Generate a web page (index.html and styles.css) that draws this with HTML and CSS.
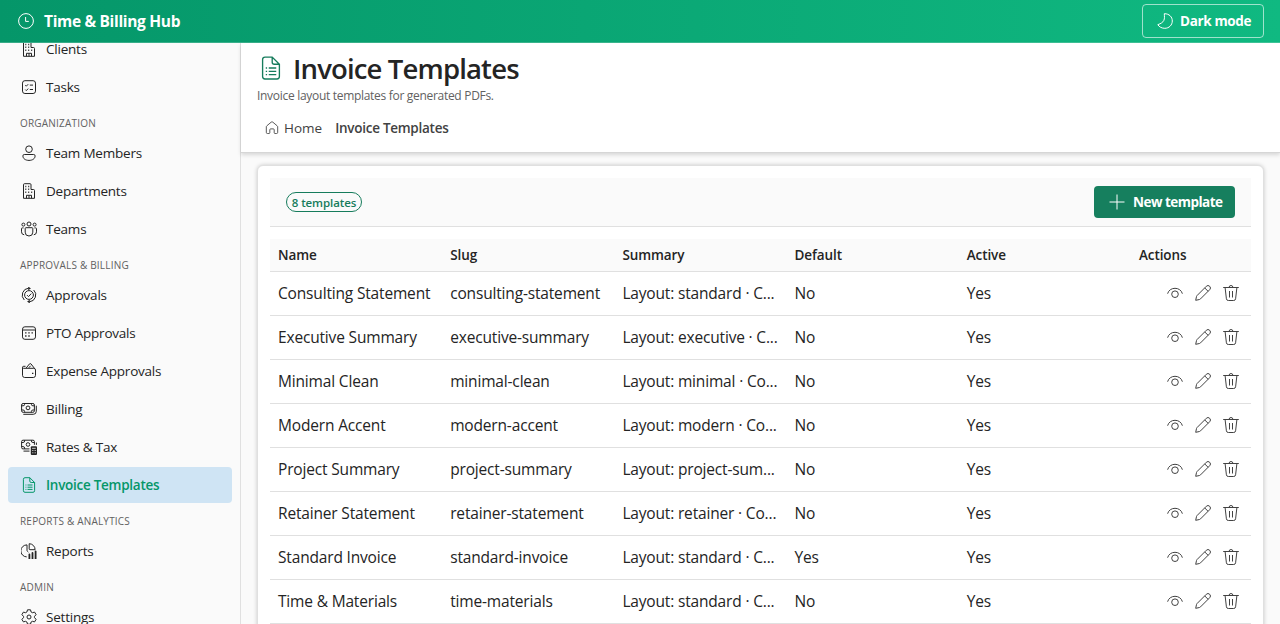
FILE: index.html
```html
<!DOCTYPE html>
<html lang="en">
<head>
    <meta charset="UTF-8">
    <meta name="viewport" content="width=device-width, initial-scale=1.0">
    <title>Invoice Templates - Time &amp; Billing Hub</title>
    <link rel="stylesheet" href="styles.css">
</head>
<body>
    <!-- icon sprite -->
    <svg class="sprite">
        <symbol id="i-clock" viewBox="0 0 16 16"><circle cx="8" cy="8" r="7.4"/><path d="M7.6 4v4.4h3.2"/></symbol>
        <symbol id="i-moon" viewBox="0 0 16 16"><path d="M7.3.7c5 0 8 3.200 8 7.300 0 4-3.200 7.300-7.500 7.300-3 0-5.500-1.300-7-3.600 3.200-1.200 5-2.300 6-4.200 1-2 .6-4.300.5-6.800z"/></symbol>
        <symbol id="i-building" viewBox="0 0 16 16"><path d="M2.500 15.300V1.700q0-1 1-1h5.500q1 0 1 1v4.800h2.500q1 0 1 1v7.800zM5.500 15.300v-3h5v3M8 12.500v2.800"/><path class="dots" d="M4.300 3.500h1M7.200 3.500h1M4.300 6.300h1M7.200 6.300h1M4.300 9.200h1M7.200 9.200h1M10.200 9.200h1"/></symbol>
        <symbol id="i-tasks" viewBox="0 0 16 16"><rect x="1.500" y="1.700" width="13" height="12.800" rx="2.400"/><path d="M4.300 6.200l1 1 1.900-2M8.800 6.100h3.200M4.300 10.600l1 1 1.900-2M8.800 10.500h3.200"/></symbol>
        <symbol id="i-person" viewBox="0 0 16 16"><circle cx="8" cy="4.200" r="3.300"/><path d="M3.300 9.500h9.400q1.400 0 1.400 1.400c0 2.800-2.600 4.500-6.100 4.500s-6.100-1.700-6.100-4.500q0-1.400 1.400-1.400z"/></symbol>
        <symbol id="i-people" viewBox="0 0 16 16"><circle cx="2.400" cy="3.600" r="1.500"/><circle cx="8" cy="3" r="2"/><circle cx="13.600" cy="3.600" r="1.500"/><path d="M5 6.700h6q.8 0 .8.800v3.700a3.800 3.800 0 0 1-7.600 0V7.500q0-.8.800-.8zM2.600 6.900H1.300q-.8 0-.8.800v3.100a3 3 0 0 0 2.700 3M13.400 6.900h1.300q.8 0 .8.800v3.100a3 3 0 0 1-2.700 3"/></symbol>
        <symbol id="i-approve" viewBox="0 0 16 16"><circle cx="8" cy="8" r="4.400"/><path d="M6 8.100l1.500 1.500 2.800-3M7.500 1.200A6.900 6.900 0 0 0 3.300 13M8.500 14.800A6.900 6.900 0 0 0 12.700 3"/><path class="solid" d="M7.200-.5l2.700 1.900-2.700 1.900zM8.800 16.500l-2.700-1.900 2.700-1.900z"/></symbol>
        <symbol id="i-calendar" viewBox="0 0 16 16"><rect x="1.500" y="1.800" width="13" height="12.500" rx="2.400"/><path d="M1.500 5h13"/><path class="dots" d="M7.300 7.900h1.400M10.500 7.900h1.400M4.100 11h1.400M7.300 11h1.400M4.100 7.900h1.400"/></symbol>
        <symbol id="i-wallet" viewBox="0 0 16 16"><path d="M1.500 4.500v7.800q0 2.200 2.200 2.200h8.600q2.200 0 2.200-2.200V7q0-1.700-1.700-1.700H2.700q-1.200 0-1.200-1t1.200-1h1.800M5.200 5l3.300-4.100q.7-.7 1.500 0l3.200 4.100M7.800 4.800l1.800-2"/><path class="dots" d="M11 10.400h1.400"/></symbol>
        <symbol id="i-money" viewBox="0 0 16 16"><rect x=".6" y="2.500" width="12.800" height="8.800" rx="1.500"/><circle cx="7" cy="6.900" r="1.900"/><path d="M3.600 2.500v.8q0 1.500-1.500 1.500H.6M10.400 2.500v.8q0 1.500 1.500 1.500h1.500M3.600 11.300v-.8Q3.600 9 2.100 9H.6M10.400 11.300v-.8q0-1.500 1.500-1.500h1.500M2.300 13.300h10q3 0 3-3V4.700"/></symbol>
        <symbol id="i-moneycalc" viewBox="0 0 16 16"><path d="M8.500 9.900H2Q.6 9.900.6 8.500V2.600q0-1.400 1.400-1.400h10q1.400 0 1.400 1.400v3.200M3.600 1.200V2q0 1.500-1.500 1.500H.6M10.400 1.200V2q0 1.500 1.500 1.500h1.500M3.600 9.900v-.8Q3.600 7.600 2.100 7.600H.6M2.500 12.100h6M15.400 3.500v2.400"/><circle cx="7" cy="5.500" r="1.800"/><rect class="solid" x="9.800" y="7.300" width="6.200" height="8.700" rx="1"/><path class="cut" d="M11.100 9.300h3.600M11.100 11.500h.8M12.600 11.500h.8M14.100 11.500h.8M11.100 13.800h.8M12.600 13.800h.8M14.100 13.800h.8"/></symbol>
        <symbol id="i-doc" viewBox="0 0 16 16"><path d="M4 .7h4.800L13.600 5.500v8.200q0 1.600-1.600 1.600H4q-1.600 0-1.600-1.600V2.300Q2.400.7 4 .7zM8.800.7v3.400q0 1.400 1.400 1.400h3.400M4.500 8h.9M6.500 8h5M4.500 10.200h.9M6.500 10.200h5M4.500 12.400h.9M6.500 12.400h5"/></symbol>
        <symbol id="i-chart" viewBox="0 0 16 16"><path d="M6 1.900a6 6 0 0 0-.3 12M6 1.900v5.300q0 .8.600 1.300l.7.700M8.200.7v5.200q0 .8.800.8h5.100A6 6 0 0 0 8.200.7z"/><path class="solid" d="M7.500 11.500q0-.9.900-.9t.9.900V16H7.500zM10.600 9.900q0-.9.900-.9t.9.900V16h-1.800zM13.700 8.300q0-.9.900-.9t.9.900V16h-1.800z"/></symbol>
        <symbol id="i-gear" viewBox="0 0 16 16"><circle cx="8" cy="8" r="2"/><path stroke-linejoin="round" d="M6.500.8h3l.6 2.200 1.300.7 2.200-.6 1.500 2.600L13.500 7.300v1.400l1.600 1.600-1.500 2.600-2.200-.6-1.300.7-.6 2.200h-3L5.900 13l-1.300-.7-2.200.6L.9 10.300l1.600-1.600V7.300L.9 5.700l1.500-2.600 2.200.6L5.900 3z"/></symbol>
        <symbol id="i-home" viewBox="0 0 16 16"><path d="M7.100 1.300q.9-.7 1.800 0l5 4.200q.6.500.6 1.300V13q0 1.300-1.300 1.300h-1.700q-1 0-1-1V10q0-1-1-1h-3q-1 0-1 1v3.300q0 1-1 1H2.800Q1.500 14.300 1.500 13V6.800q0-.8.600-1.300z"/></symbol>
        <symbol id="i-plus" viewBox="0 0 16 16"><path d="M8 .5v15M.5 8h15"/></symbol>
        <symbol id="i-eye" viewBox="0 0 16 16"><path d="M.6 8.700C1.600 5.200 4.500 3.300 8 3.300s6.400 1.900 7.400 5.400"/><circle cx="8" cy="9.200" r="3.300"/></symbol>
        <symbol id="i-pencil" viewBox="0 0 16 16"><path d="M11.300 1.300a2.300 2.300 0 0 1 3.400 3.400L5.500 13.900q-.4.400-1 .6L.7 15.300l.8-3.800q.1-.6.600-1zM9.700 2.900l3.400 3.400"/></symbol>
        <symbol id="i-trash" viewBox="0 0 16 16"><path d="M.2 2.500h15.600M6.100 2.400a1.900 1.900 0 0 1 3.800 0M2.100 2.600l1.300 11.200q.2 1.700 1.900 1.700h5.400q1.700 0 1.900-1.700L13.900 2.600M6.500 6v6.500M9.500 6v6.500"/></symbol>
    </svg>

    <header class="topbar">
        <div class="brand"><svg class="icon"><use href="#i-clock"/></svg><span>Time &amp; Billing Hub</span></div>
        <button class="mode-btn"><svg class="icon"><use href="#i-moon"/></svg><span>Dark mode</span></button>
    </header>

    <div class="layout">
        <nav class="sidebar">
            <a class="nav-item"><svg class="icon"><use href="#i-building"/></svg><span>Clients</span></a>
            <a class="nav-item"><svg class="icon"><use href="#i-tasks"/></svg><span>Tasks</span></a>
            <div class="nav-title">ORGANIZATION</div>
            <a class="nav-item"><svg class="icon"><use href="#i-person"/></svg><span>Team Members</span></a>
            <a class="nav-item"><svg class="icon"><use href="#i-building"/></svg><span>Departments</span></a>
            <a class="nav-item"><svg class="icon"><use href="#i-people"/></svg><span>Teams</span></a>
            <div class="nav-title">APPROVALS &amp; BILLING</div>
            <a class="nav-item"><svg class="icon"><use href="#i-approve"/></svg><span>Approvals</span></a>
            <a class="nav-item"><svg class="icon"><use href="#i-calendar"/></svg><span>PTO Approvals</span></a>
            <a class="nav-item"><svg class="icon"><use href="#i-wallet"/></svg><span>Expense Approvals</span></a>
            <a class="nav-item"><svg class="icon"><use href="#i-money"/></svg><span>Billing</span></a>
            <a class="nav-item"><svg class="icon"><use href="#i-moneycalc"/></svg><span>Rates &amp; Tax</span></a>
            <a class="nav-item active"><svg class="icon"><use href="#i-doc"/></svg><span>Invoice Templates</span></a>
            <div class="nav-title">REPORTS &amp; ANALYTICS</div>
            <a class="nav-item"><svg class="icon"><use href="#i-chart"/></svg><span>Reports</span></a>
            <div class="nav-title">ADMIN</div>
            <a class="nav-item"><svg class="icon"><use href="#i-gear"/></svg><span>Settings</span></a>
        </nav>

        <main class="main">
            <section class="page-head">
                <h1><svg class="icon"><use href="#i-doc"/></svg><span>Invoice Templates</span></h1>
                <p class="subtitle">Invoice layout templates for generated PDFs.</p>
                <div class="crumbs">
                    <a class="crumb"><svg class="icon"><use href="#i-home"/></svg><span>Home</span></a>
                    <span class="crumb-current">Invoice Templates</span>
                </div>
            </section>

            <section class="card">
                <div class="toolbar">
                    <span class="badge">8 templates</span>
                    <button class="new-btn"><svg class="icon"><use href="#i-plus"/></svg><span>New template</span></button>
                </div>
                <table class="grid">
                    <thead>
                        <tr><th>Name</th><th>Slug</th><th>Summary</th><th>Default</th><th>Active</th><th class="col-actions">Actions</th></tr>
                    </thead>
                    <tbody id="rows"></tbody>
                </table>
            </section>
        </main>
    </div>

    <script>
        const templates = [
            { name: "Consulting Statement", slug: "consulting-statement", summary: "Layout: standard · C...", isDefault: "No" },
            { name: "Executive Summary", slug: "executive-summary", summary: "Layout: executive · C...", isDefault: "No" },
            { name: "Minimal Clean", slug: "minimal-clean", summary: "Layout: minimal · Co...", isDefault: "No" },
            { name: "Modern Accent", slug: "modern-accent", summary: "Layout: modern · Co...", isDefault: "No" },
            { name: "Project Summary", slug: "project-summary", summary: "Layout: project-sum...", isDefault: "No" },
            { name: "Retainer Statement", slug: "retainer-statement", summary: "Layout: retainer · Co...", isDefault: "No" },
            { name: "Standard Invoice", slug: "standard-invoice", summary: "Layout: standard · C...", isDefault: "Yes" },
            { name: "Time & Materials", slug: "time-materials", summary: "Layout: standard · C...", isDefault: "No" }
        ];

        const icon = id => `<svg class="icon"><use href="#${id}"/></svg>`;

        document.getElementById('rows').innerHTML = templates.map(t => `
            <tr>
                <td>${t.name.replace('&', '&amp;')}</td>
                <td>${t.slug}</td>
                <td>${t.summary}</td>
                <td>${t.isDefault}</td>
                <td>Yes</td>
                <td><div class="actions">${icon('i-eye')}${icon('i-pencil')}${icon('i-trash')}</div></td>
            </tr>`).join('');
    </script>
</body>
</html>
```
FILE: styles.css
```css
* {
    box-sizing: border-box;
}
body {
    margin: 0;
    height: 100vh;
    overflow: hidden;
    display: flex;
    flex-direction: column;
    background-color: #fafafa;
    color: #242424;
    font-family: 'Segoe UI', 'Open Sans', 'Noto Sans', sans-serif;
    font-size: 14px;
}
button {
    font-family: inherit;
    cursor: pointer;
}
.sprite {
    display: none;
}
.icon {
    width: 16px;
    height: 16px;
    flex: none;
    fill: none;
    stroke: currentColor;
    stroke-width: 1;
    overflow: visible;
}
.dots {
    stroke-width: 1.4;
}
.solid {
    fill: currentColor;
    stroke: none;
}
.cut {
    stroke: #fafafa;
    stroke-width: 0.8;
}

/* top bar */
.topbar {
    height: 43px;
    flex: none;
    display: flex;
    align-items: center;
    justify-content: space-between;
    padding: 0 16px 0 18px;
    background: linear-gradient(90deg, #059669, #10b981);
    border-bottom: 1px solid rgba(255, 255, 255, 0.2);
    color: #fff;
}
.brand {
    display: flex;
    align-items: center;
    gap: 10px;
    font-size: 15.5px;
    font-weight: 700;
    letter-spacing: -0.32px;
}
.mode-btn {
    width: 122px;
    height: 34px;
    display: flex;
    align-items: center;
    gap: 7px;
    padding: 0 0 0 14px;
    background: transparent;
    border: 1px solid rgba(255, 255, 255, 0.6);
    border-radius: 4px;
    color: #fff;
    font-size: 13.5px;
    font-weight: 700;
    letter-spacing: -0.35px;
    white-space: nowrap;
}

.layout {
    flex: 1;
    min-height: 0;
    display: flex;
}

/* sidebar, scrolled part of the way down */
.sidebar {
    width: 241px;
    flex: none;
    overflow: hidden;
    padding: 0 8px;
    border-right: 1px solid #e0e0e0;
}
.nav-item {
    display: flex;
    align-items: center;
    gap: 9px;
    height: 36px;
    margin-bottom: 2px;
    padding-left: 13px;
    border-radius: 4px;
    font-size: 13.5px;
    letter-spacing: -0.22px;
}
.nav-item:first-child {
    margin-top: -12px;
}
.nav-item.active {
    background-color: #cfe4f4;
    color: #059669;
    font-weight: 600;
    letter-spacing: -0.27px;
}
.nav-title {
    height: 28px;
    padding: 8px 0 0 12px;
    line-height: 16px;
    font-size: 10px;
    letter-spacing: 0.2px;
    color: #616161;
}

/* page */
.main {
    flex: 1;
    min-width: 0;
}
.page-head {
    height: 110px;
    padding: 10px 16px 0;
    background-color: #fff;
    border-bottom: 1px solid #d6d6d6;
    box-shadow: 0 2px 4px rgba(0, 0, 0, 0.14);
}
h1 {
    display: flex;
    align-items: center;
    gap: 10px;
    margin: 0;
    padding-left: 2px;
    height: 34px;
    font-size: 27.5px;
    font-weight: 600;
    letter-spacing: -0.85px;
}
h1 span {
    margin-top: -4px;
}
h1 .icon {
    width: 24px;
    height: 24px;
    margin-top: -4px;
    stroke-width: 0.9;
    color: #167c5c;
}
.subtitle {
    margin: 0;
    height: 18px;
    line-height: 18px;
    font-size: 12px;
    letter-spacing: -0.3px;
    color: #616161;
}
.crumbs {
    display: flex;
    align-items: center;
    gap: 13px;
    margin-top: 7px;
    padding-left: 8px;
    height: 32px;
    color: #424242;
}
.crumb {
    display: flex;
    align-items: center;
    gap: 5px;
    font-size: 13.5px;
}
.crumb .icon {
    width: 14px;
    height: 14px;
}
.crumb-current {
    font-size: 13.5px;
    font-weight: 600;
    letter-spacing: -0.27px;
}

.card {
    height: 500px;
    margin: 12px 16px 0;
    padding: 12px;
    background-color: #fff;
    border: 1px solid #e0e0e0;
    border-radius: 6px;
    box-shadow: 0 0 4px rgba(0, 0, 0, 0.2);
}
.toolbar {
    height: 49px;
    display: flex;
    align-items: center;
    justify-content: space-between;
    padding: 0 16px;
    background-color: #fafafa;
    border-bottom: 1px solid #e0e0e0;
}
.badge {
    width: 76px;
    height: 20px;
    line-height: 19px;
    text-align: center;
    border: 1px solid #167c5c;
    border-radius: 10px;
    color: #167c5c;
    font-size: 11.5px;
    font-weight: 600;
    letter-spacing: -0.1px;
    white-space: nowrap;
}
.new-btn {
    width: 141px;
    height: 32px;
    display: flex;
    align-items: center;
    gap: 8px;
    padding: 0 0 0 15px;
    background-color: #167f5e;
    border: none;
    border-radius: 4px;
    color: #fff;
    font-size: 13.5px;
    font-weight: 700;
    letter-spacing: -0.52px;
    white-space: nowrap;
}

.grid {
    width: 100%;
    margin-top: 12px;
    table-layout: fixed;
    border-collapse: separate;
    border-spacing: 0;
}
.grid th,
.grid td {
    padding: 0 8px;
    border-bottom: 1px solid #e0e0e0;
    text-align: left;
    white-space: nowrap;
}
.grid th {
    height: 33px;
    background-color: #fafafa;
    font-size: 13.5px;
    font-weight: 600;
    letter-spacing: -0.1px;
}
.grid td {
    height: 44px;
    padding-bottom: 2px;
    font-size: 15.5px;
    letter-spacing: -0.17px;
}
.grid .col-actions {
    width: 120px;
}
.actions {
    display: flex;
    justify-content: flex-end;
    gap: 12px;
    padding-right: 4px;
    color: #424242;
}
```
